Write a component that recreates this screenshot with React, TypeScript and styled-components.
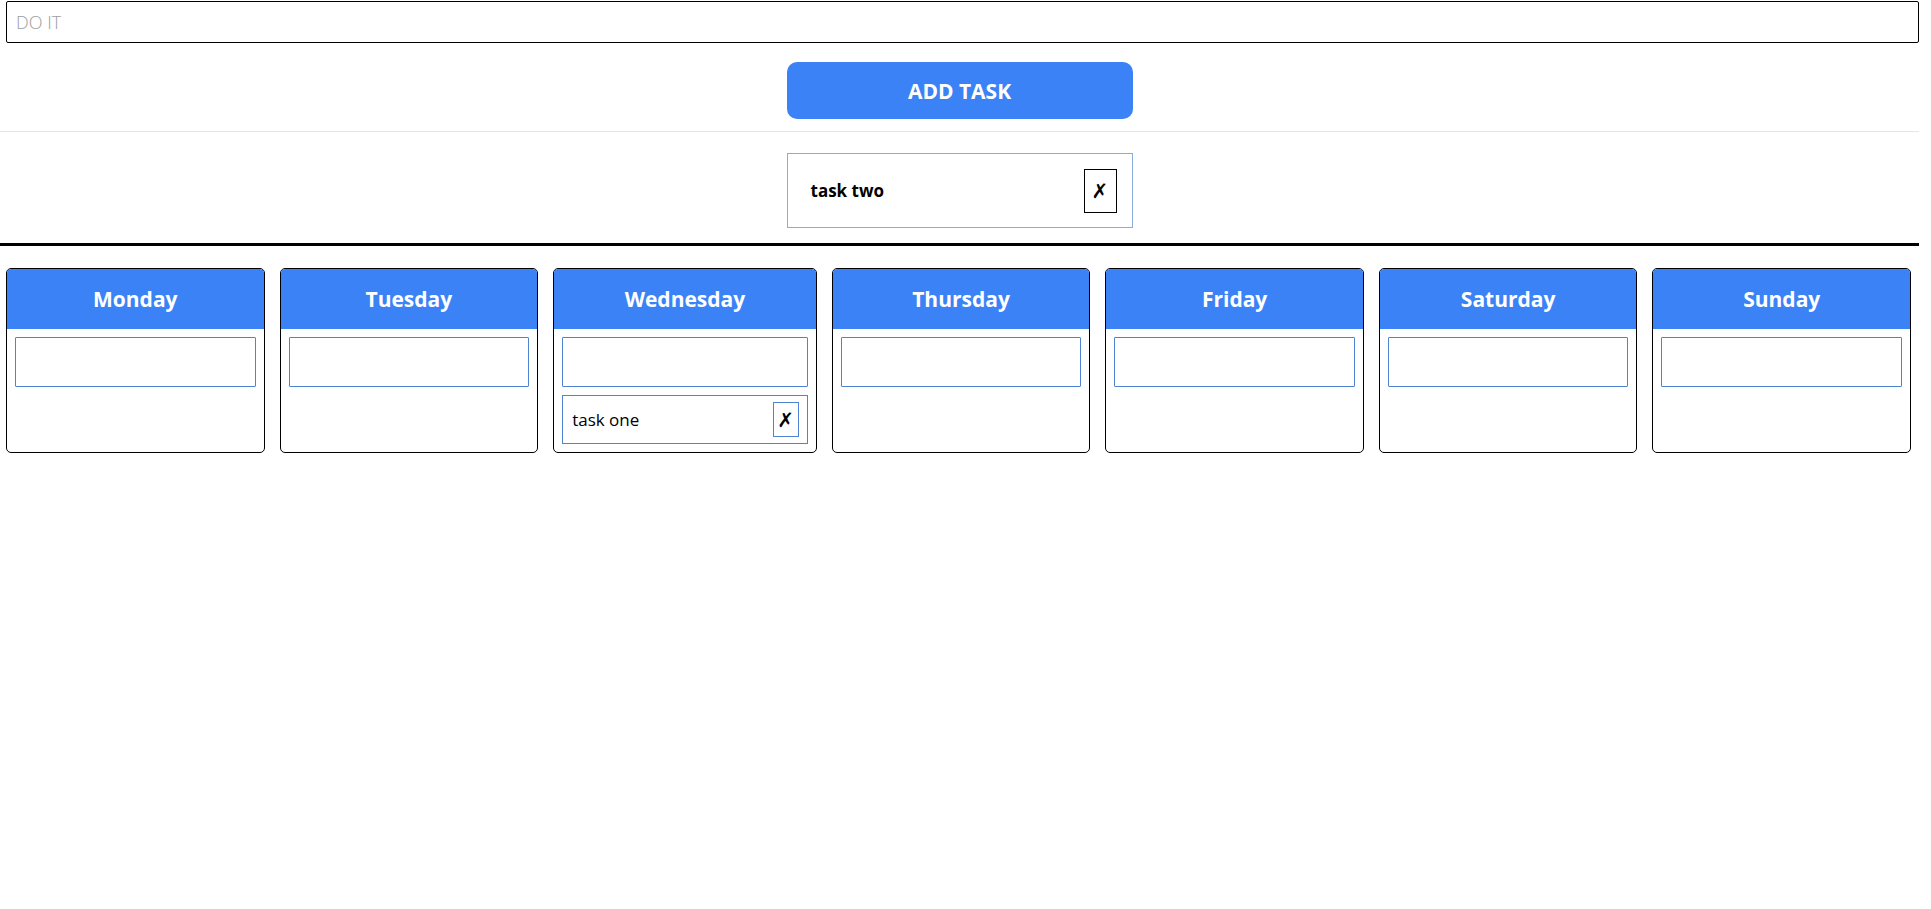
import React from 'react'
import styled, { createGlobalStyle } from 'styled-components'

const GlobalStyle = createGlobalStyle`
  body {
    margin: 0;
    background: #fff;
    font-family: 'Open Sans', 'Noto Sans', sans-serif;
    color: #000;
  }
  * {
    box-sizing: border-box;
  }
`

const BLUE = '#3b82f6'
const ITEM_BORDER = '#4f84d2'

const Page = styled.div`
  width: calc(100% - 12px);
`

const TopBar = styled.div`
  display: flex;
  flex-direction: column;
  align-items: center;
  padding: 1px 0 12px 6px;
  border-bottom: 1px solid #e5e5e5;
`

const TaskInput = styled.input`
  width: 100%;
  height: 42px;
  border: 1px solid #000;
  border-radius: 2px;
  padding: 0 9px;
  font-family: 'Open Sans', sans-serif;
  font-size: 18px;
  outline: none;
  &::placeholder {
    color: #9d9d9d;
    font-weight: 300;
  }
`

const AddButton = styled.button`
  margin-top: 19px;
  margin-left: -6px;
  width: 346px;
  height: 57px;
  border: none;
  border-radius: 10px;
  background: ${BLUE};
  color: #fff;
  font-family: 'Open Sans', sans-serif;
  font-size: 21px;
  font-weight: 700;
  cursor: pointer;
`

const Pool = styled.div`
  display: flex;
  justify-content: center;
  padding: 21px 0 15px;
  border-bottom: 3px solid #000;
`

const PoolCard = styled.div`
  width: 346px;
  height: 75px;
  display: flex;
  align-items: center;
  justify-content: space-between;
  padding: 0 15px 0 23px;
  border: 1px solid #88acdc;
`

const PoolText = styled.span`
  font-size: 17px;
  font-weight: 700;
`

const CloseButton = styled.button<{ $small?: boolean }>`
  width: ${({ $small }) => ($small ? '26px' : '33px')};
  height: ${({ $small }) => ($small ? '35px' : '44px')};
  padding: 0;
  display: flex;
  align-items: center;
  justify-content: center;
  background: #fff;
  border: 1px solid ${({ $small }) => ($small ? ITEM_BORDER : '#000')};
  font-family: 'DejaVu Sans', sans-serif;
  font-size: 20px;
  font-weight: 700;
  color: #000;
  cursor: pointer;
`

const Week = styled.div`
  display: flex;
  gap: 15px;
  padding: 22px 8px 0 6px;
`

const Column = styled.div<{ $basis: number }>`
  flex: 1 1 ${({ $basis }) => $basis}px;
  min-width: 0;
  height: 185px;
  display: flex;
  flex-direction: column;
  border: 1px solid #000;
  border-radius: 5px;
  overflow: hidden;
`

const DayHeader = styled.div`
  height: 60px;
  flex-shrink: 0;
  display: flex;
  align-items: center;
  justify-content: center;
  background: ${BLUE};
  color: #fff;
  font-size: 21px;
  font-weight: 700;
`

const DayBody = styled.div`
  display: flex;
  flex-direction: column;
  gap: 8px;
  padding: 8px 8px 0;
`

const DayInput = styled.input`
  width: 100%;
  height: 50px;
  border: 1px solid ${ITEM_BORDER};
  border-radius: 1px;
  outline: none;
  font-family: 'Open Sans', sans-serif;
  font-size: 17px;
  padding: 0 9px;
`

const TaskItem = styled.div`
  height: 49px;
  display: flex;
  align-items: center;
  justify-content: space-between;
  padding: 0 8px 0 9px;
  border: 1px solid ${ITEM_BORDER};
  font-size: 17px;
`

const days: { name: string; tasks: string[] }[] = [
  { name: 'Monday', tasks: [] },
  { name: 'Tuesday', tasks: [] },
  { name: 'Wednesday', tasks: ['task one'] },
  { name: 'Thursday', tasks: [] },
  { name: 'Friday', tasks: [] },
  { name: 'Saturday', tasks: [] },
  { name: 'Sunday', tasks: [] },
]

export default function App() {
  return (
    <Page>
      <GlobalStyle />
      <TopBar>
        <TaskInput placeholder="DO IT" />
        <AddButton>ADD TASK</AddButton>
      </TopBar>
      <Pool>
        <PoolCard>
          <PoolText>task two</PoolText>
          <CloseButton>✗</CloseButton>
        </PoolCard>
      </Pool>
      <Week>
        {days.map((day) => (
          <Column key={day.name} $basis={day.tasks.length ? 7 : 0}>
            <DayHeader>{day.name}</DayHeader>
            <DayBody>
              <DayInput />
              {day.tasks.map((t) => (
                <TaskItem key={t}>
                  <span>{t}</span>
                  <CloseButton $small>✗</CloseButton>
                </TaskItem>
              ))}
            </DayBody>
          </Column>
        ))}
      </Week>
    </Page>
  )
}
